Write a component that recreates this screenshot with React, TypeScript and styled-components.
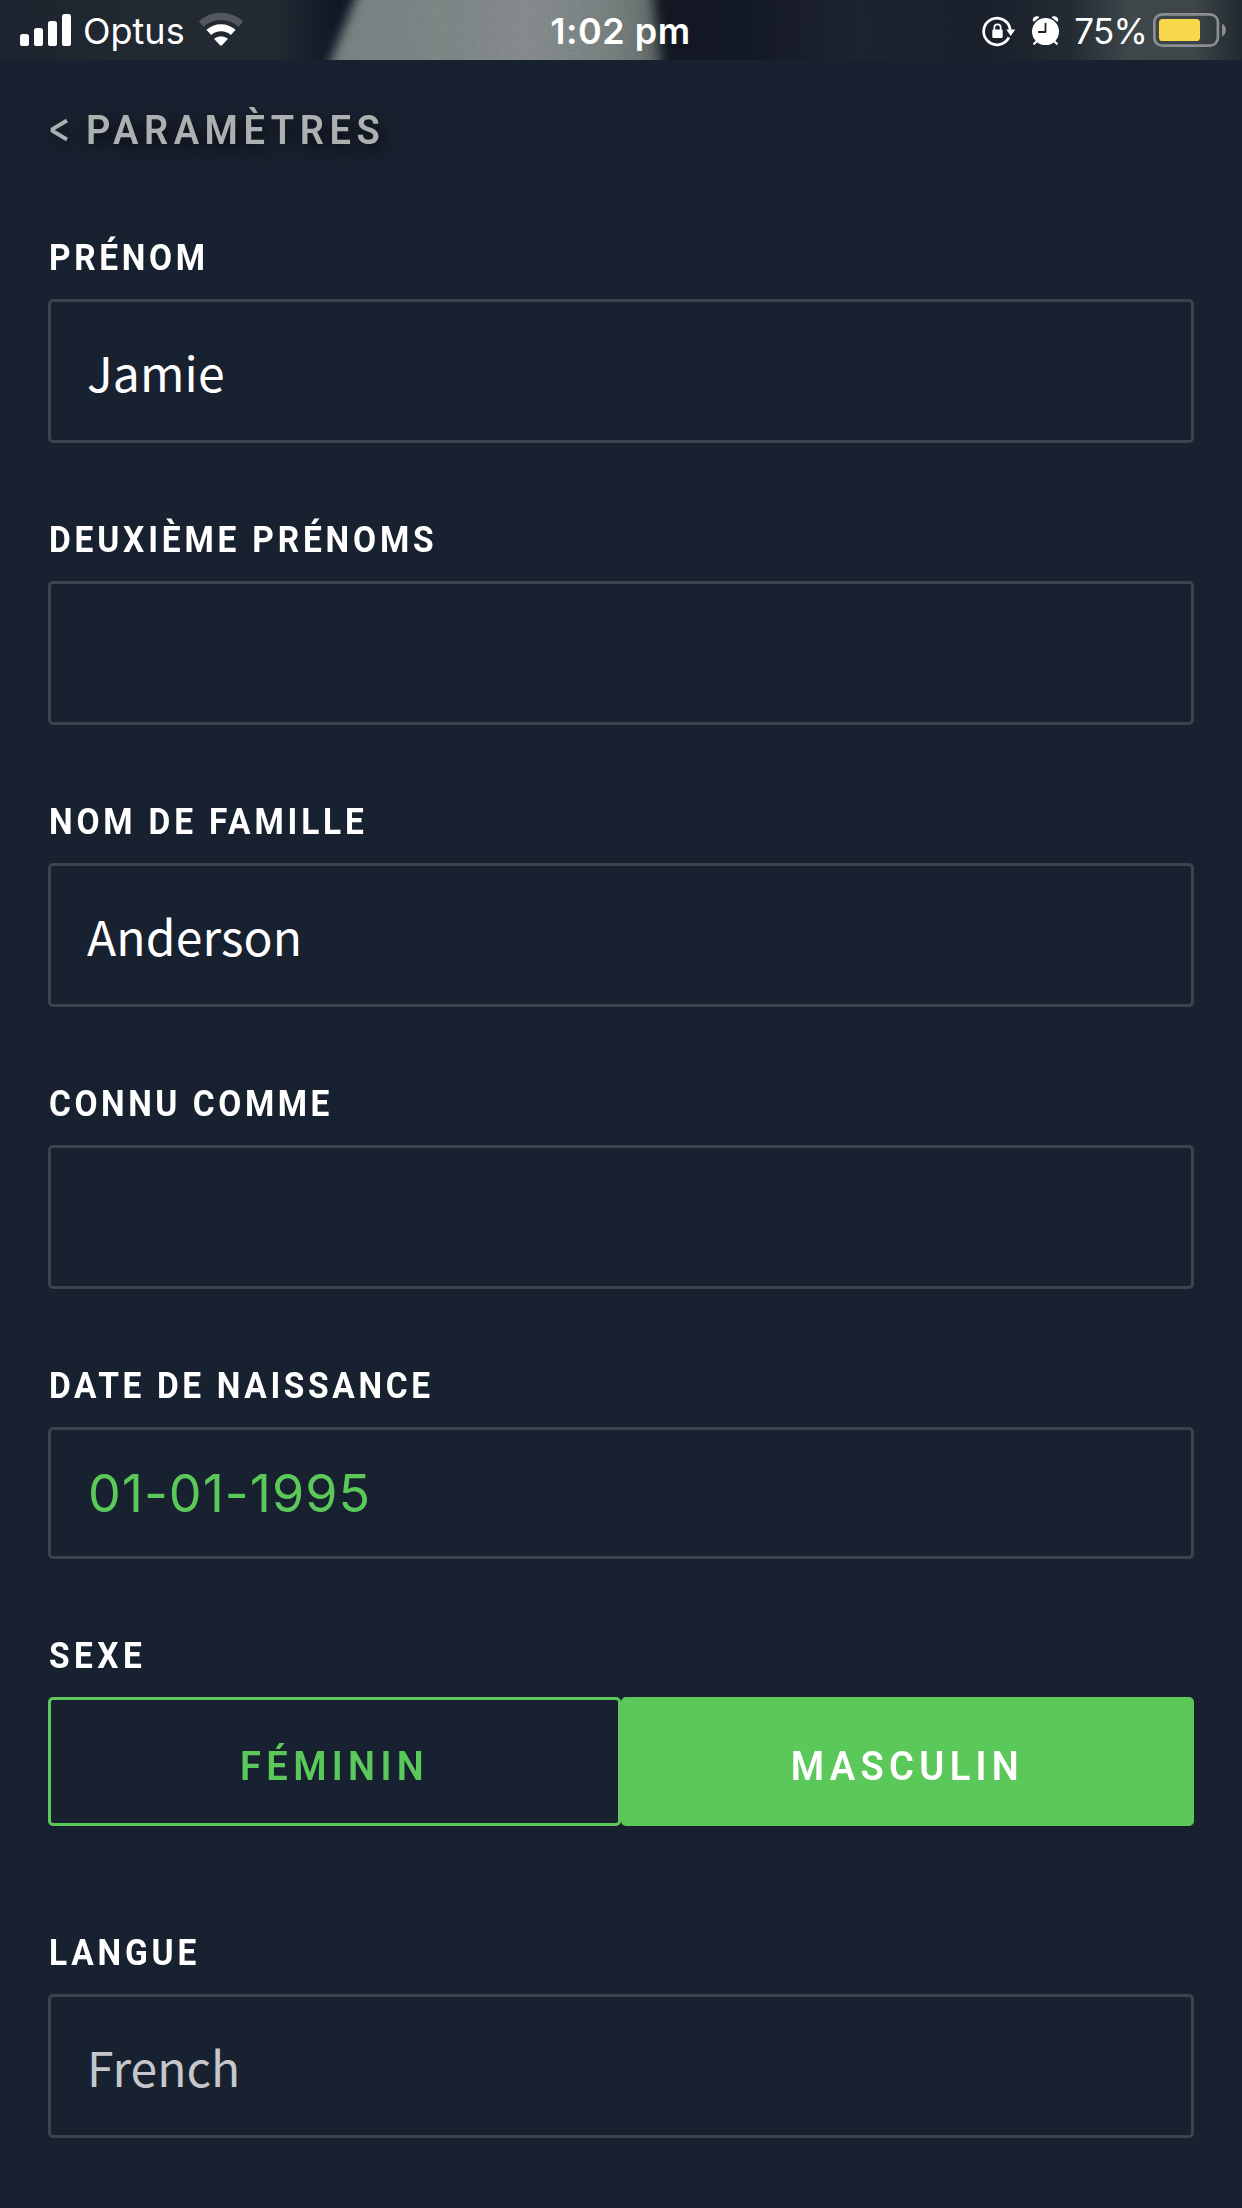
import React from "react";
import styled, { createGlobalStyle } from "styled-components";

const color = {
  bg: "#18212f",
  line: "#3b444c",
  green: "#5bc85a",
  white: "#ffffff",
  muted: "#c6c6cb",
  heading: "#acb0b1",
};

const GlobalStyle = createGlobalStyle`
  *, *::before, *::after { box-sizing: border-box; }
  body { margin: 0; background: ${color.bg}; }
`;

const Screen = styled.div`
  display: flex;
  flex-direction: column;
  width: 1242px;
  height: 2208px;
  overflow: hidden;
  background: ${color.bg};
  color: ${color.white};
  font-family: Roboto, "Liberation Sans", sans-serif;
`;

/* ---------- status bar ---------- */

const StatusBar = styled.header`
  position: relative;
  isolation: isolate;
  display: grid;
  grid-template-columns: 1fr auto 1fr;
  align-items: center;
  height: 60px;
  flex: none;
  padding: 0 16px 0 20px;
  overflow: hidden;
  font-family: Inter, "Liberation Sans", sans-serif;
  font-size: 36px;
  line-height: 44px;
`;

const Photo = styled.svg`
  position: absolute;
  inset: 0;
  z-index: -1;
`;

const Grain = styled.rect`
  mix-blend-mode: overlay;
`;

const StatusGroup = styled.div<{ $end?: boolean }>`
  display: flex;
  align-items: center;
  justify-content: ${(p) => (p.$end ? "flex-end" : "flex-start")};
  svg { display: block; flex: none; }
`;

const StatusText = styled.span<{ $track?: number }>`
  padding-top: 2px;
  white-space: nowrap;
  letter-spacing: ${(p) => p.$track ?? 0}px;
`;

const Clock = styled(StatusText)`
  margin-right: 5px;
  font-weight: 600;
`;

const Carrier = styled(StatusText)`
  margin: 0 13px 0 12px;
`;

const Percent = styled(StatusText)`
  margin: 0 6px 0 14px;
  font-size: 35px;
`;

const AlarmSlot = styled.span`
  margin-left: 14px;
`;

const SignalIcon = () => (
  <svg width="51" height="60" viewBox="20 0 51 60" fill="#fff">
    <rect x="20" y="34" width="9" height="12" rx="2.6" />
    <rect x="34" y="28" width="9" height="18" rx="2.6" />
    <rect x="48" y="21" width="9" height="25" rx="2.6" />
    <rect x="62" y="14" width="9" height="32" rx="2.6" />
  </svg>
);

const WifiIcon = () => (
  <svg width="46" height="60" viewBox="-23 -46 46 60" fill="none">
    <path d="M-19.8 -21.9A29.5 29.5 0 0 1 19.8 -21.9" stroke="#55575f" strokeWidth="7.2" />
    <path d="M-12.2 -13.6A18.3 18.3 0 0 1 12.2 -13.6" stroke="#fff" strokeWidth="7.2" />
    <path d="M-7 -7.2A10.6 10.6 0 0 1 7 -7.2L1 -0.8Q0 0 -1 -0.8Z" fill="#fff" />
  </svg>
);

const RotationLockIcon = () => (
  <svg width="35" height="60" viewBox="981 0 35 60" fill="none">
    <path d="M1007.9 37.4A13.3 13.3 0 1 1 1009.2 29.8" stroke="#fff" strokeWidth="2.7" />
    <path d="M1005.3 29.4H1014.2L1009.7 36Z" fill="#fff" />
    <rect x="991.3" y="29.6" width="10.4" height="8.4" rx="1.2" fill="#fff" />
    <path d="M993.3 30V27.6a3.2 3.2 0 0 1 6.4 0V30" stroke="#fff" strokeWidth="1.7" />
  </svg>
);

const AlarmIcon = () => (
  <svg width="29" height="60" viewBox="1031 0 29 60" fill="none">
    <circle cx="1045.5" cy="31.6" r="13.5" fill="#fff" />
    <path
      d="M1033 21.2C1032 18 1035 15.5 1038.6 16.5Q1039.7 17 1038.9 17.7L1034.4 21.3Q1033.4 22 1033 21.2Z"
      fill="#fff"
    />
    <path
      d="M1058 21.2C1059 18 1056 15.5 1052.4 16.5Q1051.3 17 1052.1 17.7L1056.6 21.3Q1057.6 22 1058 21.2Z"
      fill="#fff"
    />
    <path d="M1037.5 40.5L1034.2 43.8M1053.5 40.5L1056.8 43.8" stroke="#fff" strokeWidth="2.3" strokeLinecap="round" />
    <path d="M1045.5 23.6V32H1038.8" stroke="#1c2229" strokeWidth="1.8" strokeLinecap="round" strokeLinejoin="round" />
  </svg>
);

const BatteryIcon = () => (
  <svg width="73" height="60" viewBox="1153 0 73 60" fill="none">
    <rect x="1154.3" y="14.3" width="63.6" height="31.4" rx="8" stroke="#8b8e92" strokeWidth="2.7" />
    <rect x="1159" y="19" width="41" height="22" rx="3.6" fill="#f8d74a" />
    <path d="M1222 23.6C1227.2 26 1227.2 34 1222 36.4Z" fill="#8b8e92" />
  </svg>
);

const PhotoBackdrop = () => (
  <Photo width="1242" height="60" viewBox="0 0 1242 60" aria-hidden="true">
    <defs>
      <linearGradient id="shade" x1="0" x2="1" y1="0" y2="0">
        <stop offset="0" stopColor="#1a212b" />
        <stop offset="0.12" stopColor="#1f262e" />
        <stop offset="0.22" stopColor="#1f272e" />
        <stop offset="0.27" stopColor="#0f1623" />
        <stop offset="0.53" stopColor="#10151f" />
        <stop offset="0.59" stopColor="#101521" />
        <stop offset="0.69" stopColor="#1b212b" />
        <stop offset="0.79" stopColor="#171d28" />
        <stop offset="0.86" stopColor="#20272e" />
        <stop offset="0.91" stopColor="#3a4245" />
        <stop offset="0.96" stopColor="#394144" />
        <stop offset="1" stopColor="#1e262b" />
      </linearGradient>
      <linearGradient id="beam" x1="0" x2="1" y1="0" y2="0">
        <stop offset="0" stopColor="#6f7877" />
        <stop offset="0.35" stopColor="#747b7c" />
        <stop offset="0.6" stopColor="#7c8183" />
        <stop offset="0.82" stopColor="#707878" />
        <stop offset="0.93" stopColor="#646c6a" />
        <stop offset="1" stopColor="#465050" />
      </linearGradient>
      <filter id="soft" x="-10%" y="-60%" width="120%" height="220%">
        <feGaussianBlur stdDeviation="6 1" />
      </filter>
      <filter id="grain" x="0" y="0" width="100%" height="100%">
        <feTurbulence type="fractalNoise" baseFrequency="0.7" numOctaves="2" seed="4" />
        <feColorMatrix type="saturate" values="0" />
        <feComponentTransfer>
          <feFuncA type="linear" slope="0" intercept="0.16" />
        </feComponentTransfer>
      </filter>
    </defs>
    <rect width="1242" height="60" fill="url(#shade)" />
    <polygon points="363,-20 651,-20 664,80 323,80" fill="url(#beam)" filter="url(#soft)" />
    <Grain width="1242" height="60" filter="url(#grain)" />
  </Photo>
);

/* ---------- form ---------- */

const Form = styled.main`
  display: flex;
  flex-direction: column;
  padding: 46px 48px 0;
`;

/* Display caps: slightly narrowed and widely tracked */
const Caps = styled.span<{ $track: number; $center?: boolean }>`
  display: inline-block;
  white-space: nowrap;
  text-transform: uppercase;
  letter-spacing: ${(p) => p.$track}px;
  transform: scaleX(0.93);
  transform-origin: ${(p) => (p.$center ? "center" : "left")};
`;

const BackLink = styled.a`
  display: flex;
  align-items: center;
  height: 48px;
  margin-bottom: 83px;
  color: ${color.heading};
  font-size: 41px;
  font-weight: 600;
  line-height: 48px;
  text-shadow: 4px 6px 16px rgba(0, 0, 0, 0.8);
`;

const Chevron = styled.svg`
  display: block;
  overflow: visible;
  margin: 0 18px 0 2px;
  filter: drop-shadow(3px 5px 7px rgba(0, 0, 0, 0.6));
`;

const Field = styled.section<{ $gap?: number }>`
  display: flex;
  flex-direction: column;
  gap: 20px;
  margin-bottom: ${(p) => p.$gap ?? 76}px;
`;

const Label = styled.label`
  height: 42px;
  padding-left: 0.5px;
  font-size: 36px;
  font-weight: 700;
  line-height: 42px;
`;

const Box = styled.div<{ $muted?: boolean }>`
  display: flex;
  align-items: center;
  height: 144px;
  padding: 0 36px;
  border: 3px solid ${color.line};
  border-radius: 5px;
  color: ${(p) => (p.$muted ? color.muted : color.white)};
  font-family: "Noto Sans CJK SC", "Noto Sans", sans-serif;
  font-size: 48px;
  line-height: 70px;
  letter-spacing: ${(p) => (p.$muted ? 0 : 0.15)}px;
`;

const DateBox = styled(Box)`
  height: 132px;
  padding: 2px 37px 0;
  color: ${color.green};
  font-family: Inter, "Liberation Sans", sans-serif;
  font-size: 52px;
  letter-spacing: 1px;
`;

const Segments = styled.div`
  display: flex;
  height: 129px;
`;

const Segment = styled.button<{ $active?: boolean }>`
  flex: 1;
  margin: 0;
  padding: 9px 0 0;
  border: 3px solid ${color.green};
  border-radius: 5px;
  background: ${(p) => (p.$active ? color.green : "transparent")};
  color: ${(p) => (p.$active ? color.white : color.green)};
  font-family: inherit;
  font-size: 41px;
  font-weight: 600;
  line-height: 48px;
`;

export default function App() {
  return (
    <>
      <GlobalStyle />
      <Screen>
        <StatusBar>
          <PhotoBackdrop />
          <StatusGroup>
            <SignalIcon />
            <Carrier>Optus</Carrier>
            <WifiIcon />
          </StatusGroup>
          <Clock $track={0.5}>1:02 pm</Clock>
          <StatusGroup $end>
            <RotationLockIcon />
            <AlarmSlot>
              <AlarmIcon />
            </AlarmSlot>
            <Percent $track={-0.8}>75%</Percent>
            <BatteryIcon />
          </StatusGroup>
        </StatusBar>

        <Form>
          <BackLink>
            <Chevron width="18" height="24" viewBox="0 0 18 24" fill="none">
              <path d="M17 2.5L2.5 11.2V13L17 21.5" stroke={color.heading} strokeWidth="3.8" />
            </Chevron>
            <Caps $track={5.9}>Paramètres</Caps>
          </BackLink>

          <Field>
            <Label><Caps $track={3.9}>Prénom</Caps></Label>
            <Box>Jamie</Box>
          </Field>
          <Field>
            <Label><Caps $track={4.1}>Deuxième prénoms</Caps></Label>
            <Box />
          </Field>
          <Field>
            <Label><Caps $track={4.1}>Nom de famille</Caps></Label>
            <Box>Anderson</Box>
          </Field>
          <Field>
            <Label><Caps $track={3.8}>Connu comme</Caps></Label>
            <Box />
          </Field>
          <Field>
            <Label><Caps $track={3.9}>Date de naissance</Caps></Label>
            <DateBox>01-01-1995</DateBox>
          </Field>
          <Field $gap={106}>
            <Label><Caps $track={4.8}>Sexe</Caps></Label>
            <Segments>
              <Segment><Caps $center $track={5.7}>Féminin</Caps></Segment>
              <Segment $active><Caps $center $track={5.7}>Masculin</Caps></Segment>
            </Segments>
          </Field>
          <Field $gap={0}>
            <Label><Caps $track={4.1}>Langue</Caps></Label>
            <Box $muted>French</Box>
          </Field>
        </Form>
      </Screen>
    </>
  );
}
